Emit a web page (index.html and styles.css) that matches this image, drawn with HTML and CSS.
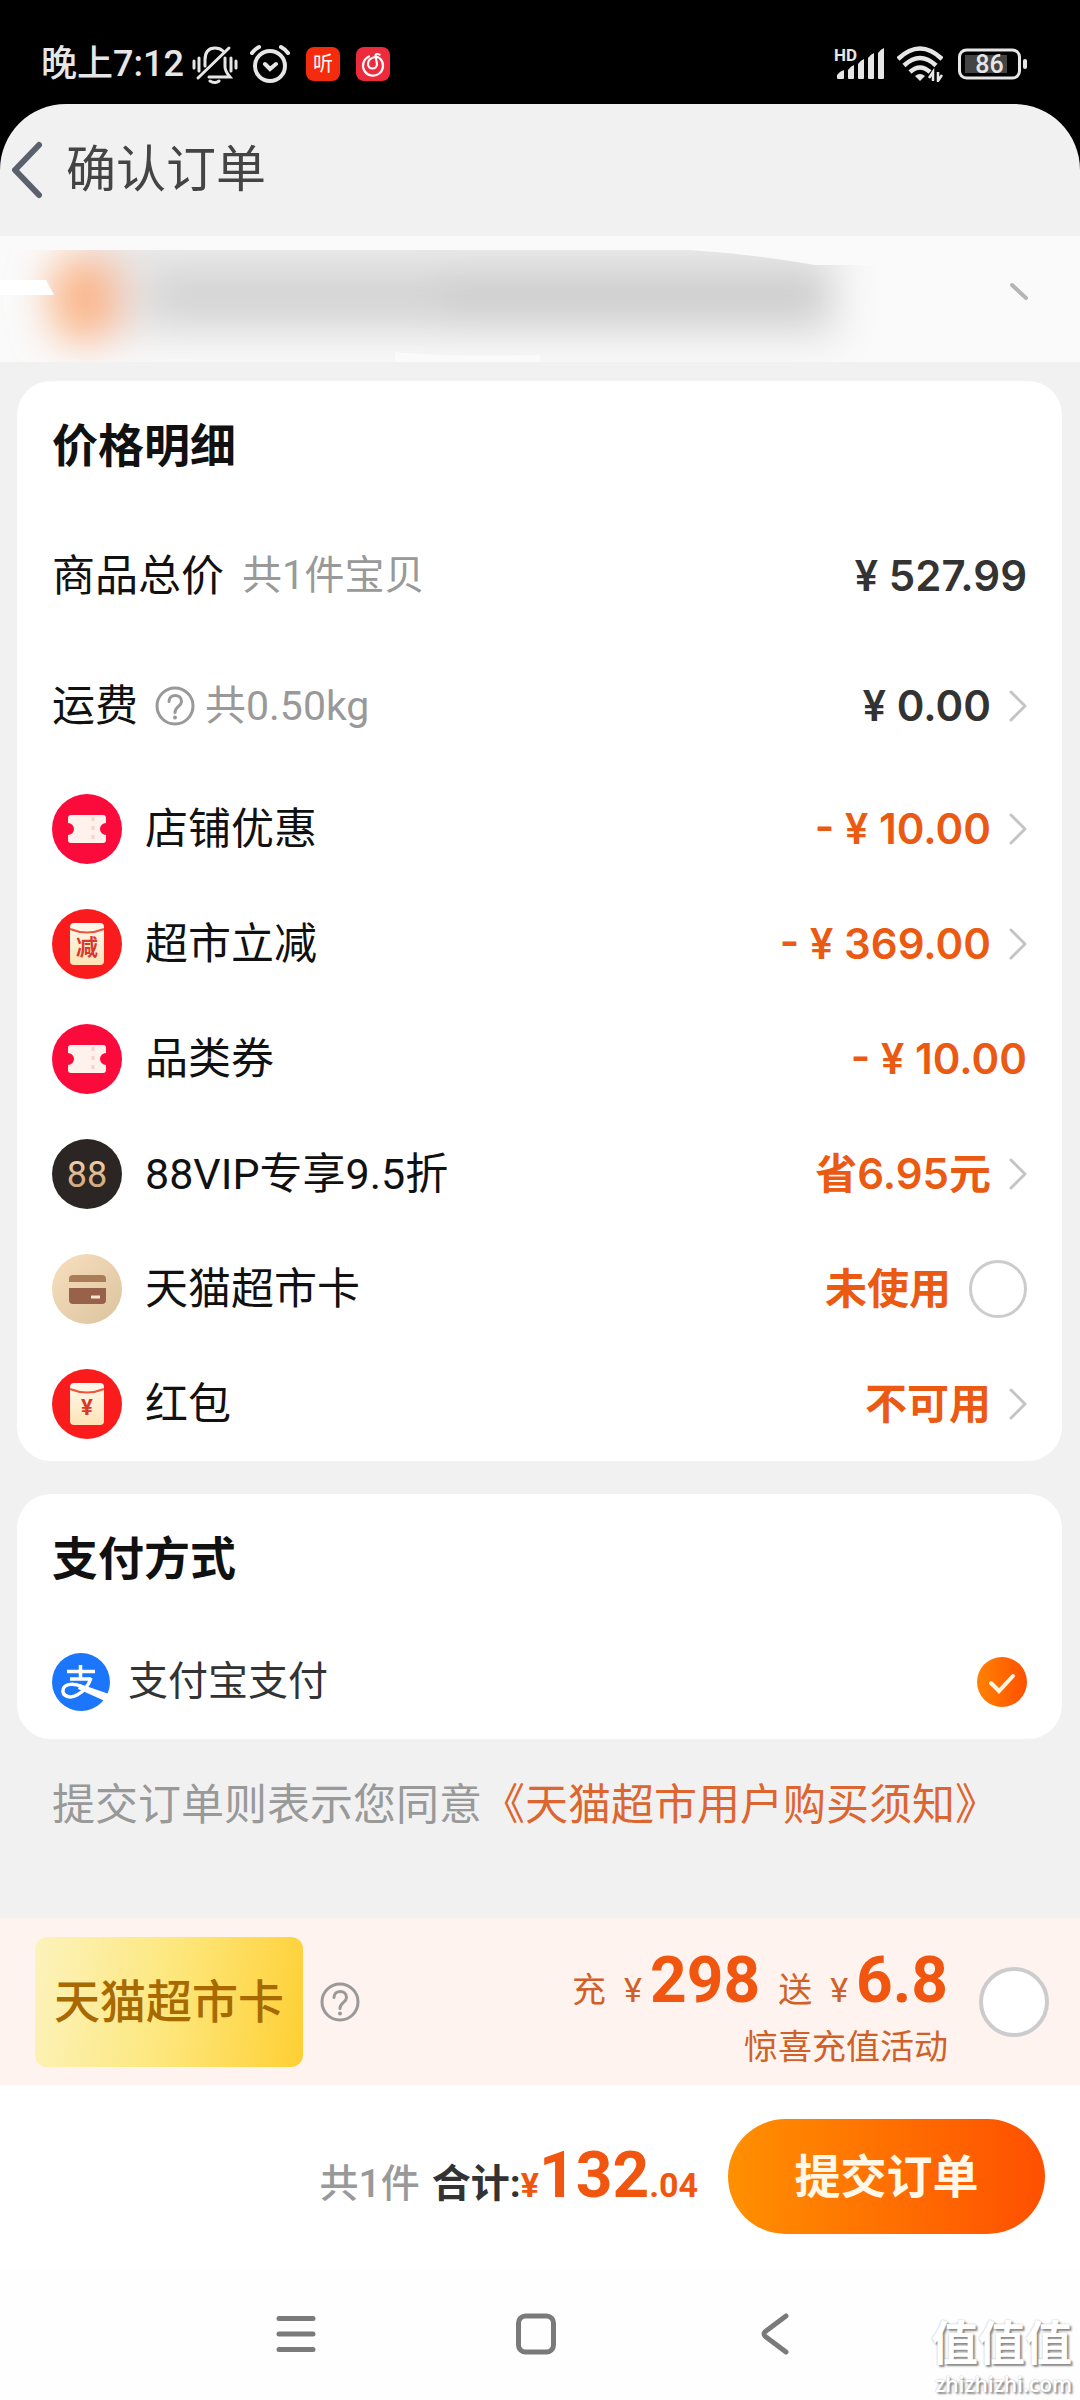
FILE: index.html
```html
<!DOCTYPE html>
<html lang="zh-CN">
<head>
<meta charset="utf-8">
<meta name="viewport" content="width=device-width, initial-scale=1">
<title>确认订单</title>
<link rel="stylesheet" href="styles.css">
</head>
<body>
<svg class="defs" aria-hidden="true">
  <defs>
    <linearGradient id="cream" x1="0" y1="0" x2="0" y2="1"><stop offset="0" stop-color="#fffaf0"/><stop offset="1" stop-color="#fde3b4"/></linearGradient>
    <linearGradient id="gold" x1="0" y1="0" x2="0" y2="1"><stop offset="0" stop-color="#f5d9b4"/><stop offset="1" stop-color="#c79a6c"/></linearGradient>
    <linearGradient id="sand" x1="0" y1="0" x2="1" y2="1"><stop offset="0" stop-color="#f8dfbd"/><stop offset="1" stop-color="#dcc3a0"/></linearGradient>
  </defs>
  <symbol id="chevron" viewBox="0 0 18 32"><path d="M2 2 16 16 2 30" fill="none" stroke="#c4c4c4" stroke-width="3" stroke-linecap="round" stroke-linejoin="round"/></symbol>
  <symbol id="help" viewBox="0 0 40 40"><g fill="none" stroke="#999" stroke-width="3"><circle cx="20" cy="20" r="18"/><path d="M14 15.500c0-8 12.500-8 12.500 0 0 5-6.500 5-6.500 11" stroke-linecap="round"/></g><circle cx="20" cy="31.500" r="2" fill="#999"/></symbol>
  <symbol id="ticket" viewBox="0 0 70 70"><circle cx="35" cy="35" r="35" fill="#fb0a3c"/><path d="M19 21h32q3 0 3 3v5a6 6 0 0 0 0 12v5q0 3-3 3H19q-3 0-3-3v-5a6 6 0 0 0 0-12v-5q0-3 3-3z" fill="#fff1ec"/><path d="M41 23v24" stroke="#fbcfcb" stroke-width="3" stroke-dasharray="4 5"/></symbol>
  <symbol id="envelope" viewBox="0 0 70 70"><circle cx="35" cy="35" r="35" fill="#fa1c1c"/><rect x="18" y="14" width="34" height="42" rx="4" fill="url(#cream)"/><path d="M18 20q17 7 34 0" fill="none" stroke="#f0523a" stroke-width="2"/></symbol>
</svg>

<header class="status">
  <div class="status-group">
    <span class="clock">晚上7:12</span>
    <svg width="46" height="40" viewBox="0 0 46 40" fill="none" stroke="#e6e6e6" stroke-width="3" stroke-linecap="round"><path d="M2 17v7M7 14v13M39 14v13M44 17v7"/><path d="M13 22V16q0-12 10-12 5 0 8 3M33 14v9q0 4 5 10H17"/><path d="M37 4 6 34"/><path d="M18 37q5 3 9 0"/></svg>
    <svg class="alarm" width="40" height="40" viewBox="0 0 40 40" fill="none" stroke="#e6e6e6" stroke-width="4" stroke-linecap="round"><circle cx="20" cy="22" r="15"/><path d="m15 20 5 5 6-5M2 9q3-4 7-6M38 9q-3-4-7-6"/></svg>
    <svg class="app" width="34" height="34" viewBox="0 0 34 34"><rect width="34" height="34" rx="8" fill="#f52b0d"/><text x="17" y="24" text-anchor="middle" class="app-word">听</text></svg>
    <svg class="app" width="34" height="34" viewBox="0 0 34 34" fill="none" stroke="#fff" stroke-width="2.200" stroke-linecap="round"><rect width="34" height="34" rx="8" fill="#ee2b3c" stroke="none"/><path d="M13 9.500a10 10 0 1 0 11 2q-2.500-2-5-1.500-7 1.500-7 7c0 6 9 6 9 0l-1.500-8q0-3 4-1.500"/></svg>
  </div>
  <div class="status-group">
    <svg width="52" height="36" viewBox="0 0 52 36" fill="#e6e6e6"><text x="0" y="15" class="hd">HD</text><path d="M3 32v-3q3-4 7-5v8q0 1-1 1H4q-1 0-1-1zM14 32v-8q3-4 6-5v13q0 1-1 1h-4q-1 0-1-1zM24 32V18q3-4 6-5v19q0 1-1 1h-4q-1 0-1-1zM34 32V12q3-4 6-5v25q0 1-1 1h-4q-1 0-1-1zM44 32V7q3-4 6-5v30q0 1-1 1h-4q-1 0-1-1z"/></svg>
    <svg class="wifi" width="46" height="36" viewBox="0 0 46 36" fill="none" stroke="#e6e6e6" stroke-width="4.500"><path d="M1 13q22-21 44 0M7 19.500q16-15 32 0M13 26q10-9 20 0"/><path d="M18 30q5-4 10 0l-5 5z" fill="#e6e6e6" stroke="none"/><path d="M36 35v-9l-4 6M41 26v9l4-6" stroke-width="2.500"/></svg>
    <svg class="battery" width="70" height="32" viewBox="0 0 70 32"><rect x="1.500" y="2" width="60" height="28" rx="7" fill="none" stroke="#e6e6e6" stroke-width="3"/><rect x="7" y="7" width="42" height="18" fill="#444"/><rect x="65" y="11" width="4" height="10" rx="2" fill="#e6e6e6"/><text x="31.500" y="25" text-anchor="middle" class="level">86</text></svg>
  </div>
</header>

<main class="sheet">
  <div class="topbar">
    <button class="plain back" aria-label="返回"><svg width="32" height="58" viewBox="0 0 32 58"><path d="M27 4 3 29 27 54" fill="none" stroke="#5b606d" stroke-width="6" stroke-linecap="round" stroke-linejoin="round"/></svg></button>
    <h1 class="page-title">确认订单</h1>
  </div>

  <svg class="address" viewBox="0 0 1080 126" preserveAspectRatio="none" aria-hidden="true">
    <defs>
      <filter id="haze" x="-30%" y="-60%" width="160%" height="220%"><feGaussianBlur stdDeviation="20"/></filter>
      <clipPath id="smear"><path d="M0 14H690Q750 18 815 29H1080V126H0z"/></clipPath>
    </defs>
    <rect width="1080" height="126" fill="#fafafa"/>
    <g clip-path="url(#smear)"><g filter="url(#haze)">
      <rect x="90" y="-10" width="750" height="116" fill="#e8e8e8"/>
      <rect x="150" y="36" width="680" height="48" fill="#d2d2d2"/>
      <rect x="440" y="36" width="380" height="48" fill="#cbcbcb"/>
      <rect x="50" y="18" width="72" height="88" rx="30" fill="#fab78c"/>
    </g></g>
    <path d="M0 44H46L54 59H0z" fill="#fff"/>
    <path d="M395 116Q440 121 540 119V126H395z" fill="#fafafa"/>
    <path d="m1012 49 14 13" stroke="#b5b5b5" stroke-width="4" stroke-linecap="round"/>
  </svg>

  <section class="card">
    <h2 class="card-title">价格明细</h2>
    <div class="row row-tall"><span>商品总价</span><span class="note note-apart">共1件宝贝</span><span class="value dark">¥ 527.99</span></div>
    <div class="row row-tall"><span>运费</span><button class="plain help-small" aria-label="运费说明"><svg width="40" height="40"><use href="#help"/></svg></button><span class="note">共0.50kg</span><button class="plain value dark">¥ 0.00<svg width="18" height="32"><use href="#chevron"/></svg></button></div>
    <div class="row"><svg class="badge" width="70" height="70"><use href="#ticket"/></svg><span>店铺优惠</span><button class="plain value">- ¥ 10.00<svg width="18" height="32"><use href="#chevron"/></svg></button></div>
    <div class="row"><svg class="badge" width="70" height="70" viewBox="0 0 70 70"><use href="#envelope"/><text x="35" y="46" text-anchor="middle" class="envelope-word">减</text></svg><span>超市立减</span><button class="plain value">- ¥ 369.00<svg width="18" height="32"><use href="#chevron"/></svg></button></div>
    <div class="row"><svg class="badge" width="70" height="70"><use href="#ticket"/></svg><span>品类券</span><span class="value">- ¥ 10.00</span></div>
    <div class="row"><svg class="badge" width="70" height="70" viewBox="0 0 70 70"><circle cx="35" cy="35" r="35" fill="#2b2624"/><text x="35" y="48" text-anchor="middle" class="vip-word">88</text></svg><span>88VIP专享9.5折</span><button class="plain value">省6.95元<svg width="18" height="32"><use href="#chevron"/></svg></button></div>
    <div class="row"><svg class="badge" width="70" height="70" viewBox="0 0 70 70"><circle cx="35" cy="35" r="35" fill="url(#sand)"/><path d="M17 28v-3q0-4 4-4h29q4 0 4 4v3z" fill="#a97d59"/><path d="M17 34h37v12q0 4-4 4H21q-4 0-4-4z" fill="#976249"/><path d="M39 43h9" stroke="#fbe7cf" stroke-width="3"/></svg><label for="use-card">天猫超市卡</label><span class="value">未使用<input class="tick" type="checkbox" id="use-card"></span></div>
    <div class="row"><svg class="badge" width="70" height="70" viewBox="0 0 70 70"><use href="#envelope"/><text x="35" y="46" text-anchor="middle" class="envelope-word">¥</text></svg><span>红包</span><button class="plain value">不可用<svg width="18" height="32"><use href="#chevron"/></svg></button></div>
  </section>

  <section class="card card-pay">
    <h2 class="card-title">支付方式</h2>
    <div class="row pay-row">
      <svg class="alipay" width="58" height="58" viewBox="0 0 58 58"><circle cx="29" cy="29" r="29" fill="#1b76fb"/><g fill="none" stroke="#fff"><path d="M15 18.500H43M18 26H39M28.500 12V26" stroke-width="3.500"/><path d="M39 25Q35 37 25 42C18 46 10 43 11 37 12 30 23 30 30 34" stroke-width="3.500"/></g><path d="M28 31 57 41Q56 46 53 48L26 36z" fill="#fff"/></svg>
      <label for="alipay">支付宝支付</label>
      <input class="pick" type="radio" name="pay" id="alipay" checked>
    </div>
  </section>

  <p class="terms">提交订单则表示您同意<a href="#terms">《天猫超市用户购买须知》</a></p>
</main>

<section class="promo">
  <div class="gift-card">天猫超市卡</div>
  <button class="plain promo-help" aria-label="超市卡说明"><svg width="40" height="40"><use href="#help"/></svg></button>
  <label class="promo-text" for="recharge">
    <span class="promo-line"><span>充</span><span class="yuan">¥</span><b>298</b><span class="give">送</span><span class="yuan">¥</span><b>6.8</b></span>
    <span class="promo-note">惊喜充值活动</span>
  </label>
  <input class="tick tick-large" type="checkbox" id="recharge">
</section>

<footer class="checkout">
  <p class="total"><span class="count">共1件</span><span class="sum">合计:</span><span class="price"><small>¥</small>132<small>.04</small></span></p>
  <button class="submit">提交订单</button>
</footer>

<nav class="keys">
  <button class="plain" aria-label="菜单"><svg width="40" height="44" viewBox="0 0 40 44"><path d="M3 6.500H37M3 22H37M3 37.500H37" stroke="#7a7a7a" stroke-width="5" stroke-linecap="round"/></svg></button>
  <button class="plain" aria-label="主页"><svg width="40" height="44" viewBox="0 0 40 44"><rect x="2.500" y="4" width="35" height="36" rx="7" fill="none" stroke="#7a7a7a" stroke-width="5"/></svg></button>
  <button class="plain" aria-label="返回上一页"><svg width="40" height="44" viewBox="0 0 40 44"><path d="M30 4 10 19Q6 22 10 25L30 40" fill="none" stroke="#7a7a7a" stroke-width="5" stroke-linecap="round"/></svg></button>
  <div class="mark"><span class="mark-name">值值值</span><span class="mark-site">zhizhizhi.com</span></div>
</nav>
</body>
</html>
```
FILE: styles.css
```css
* { box-sizing: border-box; }

html { background: #fefefe; }

body {
  margin: 0;
  background: #000;
  color: #111;
  font-family: Roboto, "Noto Sans CJK SC", sans-serif;
  font-size: 43px;
  line-height: 60px;
}

h1, h2, p { margin: 0; }
svg { display: block; flex: none; }
.defs { position: absolute; width: 0; height: 0; }

.plain {
  padding: 0;
  border: 0;
  background: none;
  color: inherit;
  font: inherit;
}

/* Status bar */
.status {
  display: flex;
  justify-content: space-between;
  padding: 34px 52px 10px 41px;
  color: #e6e6e6;
}
.status-group { display: flex; align-items: center; }
.clock { margin-right: 8px; font-size: 36px; font-weight: 500; }
.alarm { margin-left: 12px; }
.app { margin-left: 16px; }
.app-word { fill: #fff; font-size: 20px; }
.hd { font-size: 17px; font-weight: 700; }
.wifi { margin-left: 11px; }
.battery { margin-left: 15px; }
.level { fill: #e6e6e6; font-size: 25px; font-weight: 500; }

/* Page sheet */
.sheet {
  border-radius: 66px 66px 0 0;
  background: #f1f1f1;
  overflow: hidden;
}
.topbar {
  display: flex;
  align-items: center;
  gap: 22px;
  height: 132px;
  padding-left: 12px;
}
.page-title { color: #444; font-size: 50px; font-weight: 400; }
.address { width: 100%; height: 126px; }

/* Cards */
.card {
  margin: 19px 18px 0 17px;
  padding: 35px;
  padding-bottom: 0;
  border-radius: 34px;
  background: #fff;
}
.card-pay { margin-top: 33px; }
.card-title { margin-bottom: 35px; font-size: 46px; font-weight: 700; }
.row { display: flex; align-items: center; height: 115px; }
.row-tall { height: 130px; }
.badge { margin-right: 23px; }
.note { color: #999; font-size: 41px; }
.note-apart { margin-left: 18px; font-size: 40px; }
.help-small { margin: 0 10px 0 17px; }
.value {
  display: flex;
  align-items: center;
  gap: 18px;
  margin-left: auto;
  color: #eb5a12;
  font-family: Inter, "Noto Sans CJK SC", sans-serif;
  font-size: 42px;
  font-weight: 600;
}
.dark { color: #333; }
.envelope-word { fill: #d8392b; font-size: 22px; font-weight: 700; }
.vip-word { fill: url(#gold); font-size: 36px; }

.tick {
  flex: none;
  width: 58px;
  height: 58px;
  margin: 0;
  border: 3px solid #ccc;
  border-radius: 50%;
  background: #fff;
  appearance: none;
}
.tick-large { width: 70px; height: 70px; border-width: 4px; }

.pay-row { color: #333; font-size: 40px; }
.alipay { margin-right: 18px; }
.pick {
  width: 50px;
  height: 50px;
  margin: 0 0 0 auto;
  border-radius: 50%;
  background:
    url("data:image/svg+xml,%3Csvg xmlns='http://www.w3.org/2000/svg' viewBox='0 0 50 50'%3E%3Cpath d='M14 26l8 8 14-15' fill='none' stroke='%23fff5e0' stroke-width='4' stroke-linecap='round'/%3E%3C/svg%3E"),
    linear-gradient(90deg, #ff8200, #ff5000);
  appearance: none;
}

.terms { padding: 36px 52px 83px; color: #999; white-space: nowrap; }
.terms a { color: #dd6530; text-decoration: none; }

/* Recharge offer */
.promo {
  display: flex;
  align-items: center;
  height: 167px;
  padding: 0 31px 0 35px;
  background: #fef3ee;
}
.gift-card {
  padding: 35px 19px;
  border-radius: 12px;
  background: linear-gradient(100deg, #fcf3bd, #fde77c 50%, #ffcf33);
  color: #a86a00;
  font-size: 46px;
  font-weight: 500;
}
.promo-help { margin-left: 17px; }
.promo-text {
  display: flex;
  flex-direction: column;
  align-items: flex-end;
  margin: 0 31px 0 auto;
  padding-top: 22px;
  color: #cf6128;
  font-size: 34px;
}
.promo-line { display: flex; align-items: baseline; }
.promo-line b { color: #f0560f; font-size: 64px; font-weight: 700; }
.promo-note { line-height: 54px; }
.yuan { margin: 0 8px 0 18px; }
.give { margin-left: 18px; }

/* Checkout bar */
.checkout {
  display: flex;
  align-items: center;
  justify-content: flex-end;
  gap: 30px;
  padding: 34px 35px;
  background: #fff;
}
.total { display: flex; align-items: baseline; padding-top: 8px; font-size: 39px; font-weight: 500; }
.count { color: #999; }
.sum { margin-left: 12px; color: #333; font-weight: 700; }
.price { color: #f0560f; font-size: 64px; font-weight: 700; }
.price small { font-size: 34px; }
.submit {
  width: 317px;
  height: 115px;
  padding: 0;
  border: 0;
  border-radius: 58px;
  background: linear-gradient(90deg, #ff9000, #ff5000);
  color: #fff8e8;
  font: inherit;
  font-size: 46px;
  font-weight: 700;
}

/* System keys */
.keys {
  position: relative;
  display: flex;
  align-items: center;
  justify-content: center;
  gap: 200px;
  height: 132px;
  padding-right: 8px;
  background: #fefefe;
}
.mark {
  position: absolute;
  right: 8px;
  bottom: 2px;
  display: flex;
  flex-direction: column;
  align-items: flex-end;
  color: #fff;
  text-shadow: 2px 2px 2px #8a8a8a, 0 0 2px #b5b5b5;
}
.mark-name { font-size: 47px; font-weight: 700; line-height: 52px; }
.mark-site { font-family: "Open Sans", sans-serif; font-size: 21px; font-weight: 600; line-height: 28px; }
```
